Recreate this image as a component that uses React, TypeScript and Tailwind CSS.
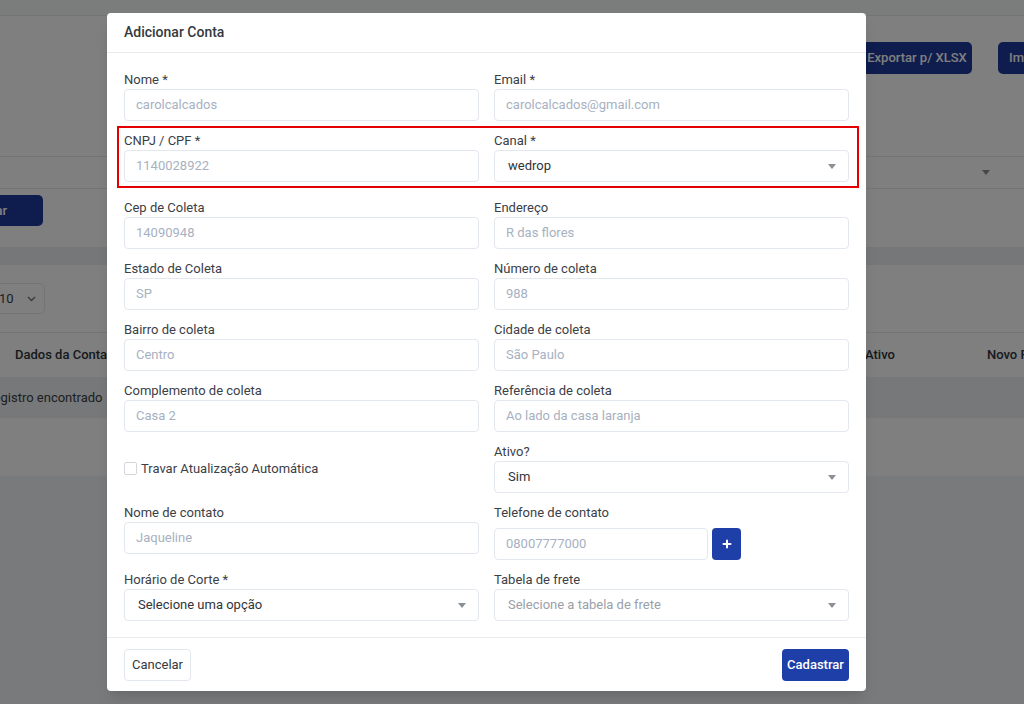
import { Plus } from "lucide-react";

const labelCls = "block text-[13px] leading-[19px] text-[#3b4047]";
const inputCls =
  "flex h-[32px] w-full items-center rounded-[4px] border border-[#e3e7ee] bg-white px-[11px] text-[13px] text-[#a7b1c1]";

function Caret({ className = "" }: { className?: string }) {
  return (
    <svg width="8" height="5" viewBox="0 0 8 5" className={className} aria-hidden>
      <path d="M0 0h8L4 5z" fill="#8a8f96" />
    </svg>
  );
}

function Field({ label, value, className = "" }: { label: string; value: string; className?: string }) {
  return (
    <div className={className}>
      <span className={labelCls}>{label}</span>
      <div className={inputCls}>{value}</div>
    </div>
  );
}

function SelectField({
  label,
  value,
  muted = false,
  className = "",
}: {
  label: string;
  value: string;
  muted?: boolean;
  className?: string;
}) {
  return (
    <div className={className}>
      <span className={labelCls}>{label}</span>
      <div className="flex h-[32px] w-full items-center justify-between rounded-[4px] border border-[#e3e7ee] bg-white pl-[13px] pr-[12px] text-[13px]">
        <span className={muted ? "text-[#9aa0a8]" : "text-[#2f343a]"}>{value}</span>
        <Caret />
      </div>
    </div>
  );
}

function BackgroundPage() {
  return (
    <div className="flex h-full w-full flex-col bg-[#f3f4f6]">
      <div className="h-[16px] shrink-0 border-b border-[#e6e8eb] bg-[#f7f8f9]" />
      <div className="flex h-[74px] shrink-0 items-start gap-[26px] bg-white pl-[862px] pt-[26px]">
        <div className="flex h-[32px] w-[110px] shrink-0 items-center justify-center rounded-[5px] bg-[#1e3a9c] text-[13px] font-medium text-white">
          Exportar p/ XLSX
        </div>
        <div className="flex h-[32px] w-[110px] shrink-0 items-center rounded-[5px] bg-[#1e3a9c] pl-[11px] text-[13px] font-medium text-white">
          Importar
        </div>
      </div>
      <div className="flex h-[157px] shrink-0 flex-col bg-white">
        <div className="mt-[48px] flex items-end gap-[20px]">
          <div className="-ml-[20px] h-[33px] w-[800px] shrink-0 border-y border-[#e6e8eb]" />
          <div className="w-[240px] shrink-0">
            <span className="block text-[13px] leading-[18px] text-[#3b4047]">Situação</span>
            <div className="flex h-[33px] items-center border-y border-[#e6e8eb] pl-[182px]">
              <Caret />
            </div>
          </div>
        </div>
        <div className="-ml-[80px] mt-[6px] flex h-[31px] w-[123px] items-center justify-end rounded-[5px] bg-[#1e3a9c] pr-[36px] text-[13px] font-medium text-white">
          Filtrar
        </div>
      </div>
      <div className="h-[18px] shrink-0 bg-[#eceef1]" />
      <div className="flex h-[211px] shrink-0 flex-col bg-white">
        <div className="-ml-[20px] mt-[18px] flex h-[31px] w-[65px] items-center gap-[13px] rounded-[5px] border border-[#e6e8eb] pl-[18px] text-[13px] text-[#3b4047]">
          <span>10</span>
          <svg width="9" height="6" viewBox="0 0 9 6" aria-hidden>
            <path d="M1 1l3.5 3.5L8 1" stroke="#6b7078" strokeWidth="1.3" fill="none" />
          </svg>
        </div>
        <div className="mt-[18px] flex h-[45px] items-center whitespace-nowrap border-t border-[#e6e8eb] text-[13px] font-medium text-[#2f343a]">
          <span className="ml-[15px] w-[84px] shrink-0">Dados da Conta</span>
          <span className="ml-[766px] w-[36px] shrink-0">Ativo</span>
          <span className="ml-[86px] shrink-0">Novo Pedido</span>
        </div>
        <div className="flex h-[41px] items-center bg-[#eef0f2] text-[13px] text-[#3b4047]">
          <span className="-ml-[63px] whitespace-nowrap">Nenhum registro encontrado</span>
        </div>
      </div>
    </div>
  );
}

export default function App() {
  return (
    <div className="relative h-[704px] w-[1024px] overflow-hidden font-['Roboto','Liberation_Sans',sans-serif]">
      <BackgroundPage />
      <div className="absolute inset-0 bg-black/50" />

      <div className="absolute left-[107px] top-[13px] flex w-[759px] flex-col rounded-[4px] bg-white shadow-lg">
        <div className="flex h-[40px] items-center border-b border-[#e9ecef] px-[17px] text-[14px] font-medium text-[#343a40]">
          Adicionar Conta
        </div>

        <div className="grid grid-cols-2 gap-x-[15px] gap-y-[10px] px-[17px] pb-[16px] pt-[17px]">
          <Field label="Nome *" value="carolcalcados" />
          <Field label="Email *" value="carolcalcados@gmail.com" />

          <Field label="CNPJ / CPF *" value="1140028922" className="mb-[6px]" />
          <SelectField label="Canal *" value="wedrop" className="mb-[6px]" />

          <Field label="Cep de Coleta" value="14090948" />
          <Field label="Endereço" value="R das flores" />

          <Field label="Estado de Coleta" value="SP" />
          <Field label="Número de coleta" value="988" />

          <Field label="Bairro de coleta" value="Centro" />
          <Field label="Cidade de coleta" value="São Paulo" />

          <Field label="Complemento de coleta" value="Casa 2" />
          <Field label="Referência de coleta" value="Ao lado da casa laranja" />

          <div className="flex items-center pt-[2px]">
            <span className="h-[13px] w-[13px] rounded-[2px] border border-[#d3d7dc] bg-white" />
            <span className="ml-[4px] text-[13px] text-[#3b4047]">Travar Atualização Automática</span>
          </div>
          <SelectField label="Ativo?" value="Sim" />

          <Field label="Nome de contato" value="Jaqueline" />
          <div>
            <span className={labelCls + " mb-[6px]"}>Telefone de contato</span>
            <div className="flex items-center gap-[4px]">
              <div className={inputCls + " !w-[214px]"}>08007777000</div>
              <div className="flex h-[32px] w-[29px] items-center justify-center rounded-[4px] bg-[#1e3ea8]">
                <Plus size={12} strokeWidth={4} color="white" />
              </div>
            </div>
          </div>

          <SelectField label="Horário de Corte *" value="Selecione uma opção" />
          <SelectField label="Tabela de frete" value="Selecione a tabela de frete" muted />
        </div>

        <div className="flex items-center justify-between border-t border-[#e9ecef] px-[17px] pb-[10px] pt-[11px]">
          <div className="flex h-[32px] w-[67px] items-center justify-center rounded-[4px] border border-[#e3e7ee] bg-white text-[13px] text-[#343a40]">
            Cancelar
          </div>
          <div className="flex h-[32px] w-[67px] items-center justify-center rounded-[4px] bg-[#1e3ea8] text-[13px] font-medium text-white">
            Cadastrar
          </div>
        </div>
      </div>

      <div className="pointer-events-none absolute left-[117px] top-[126px] h-[62px] w-[742px] border-2 border-[#e40000]" />
    </div>
  );
}
